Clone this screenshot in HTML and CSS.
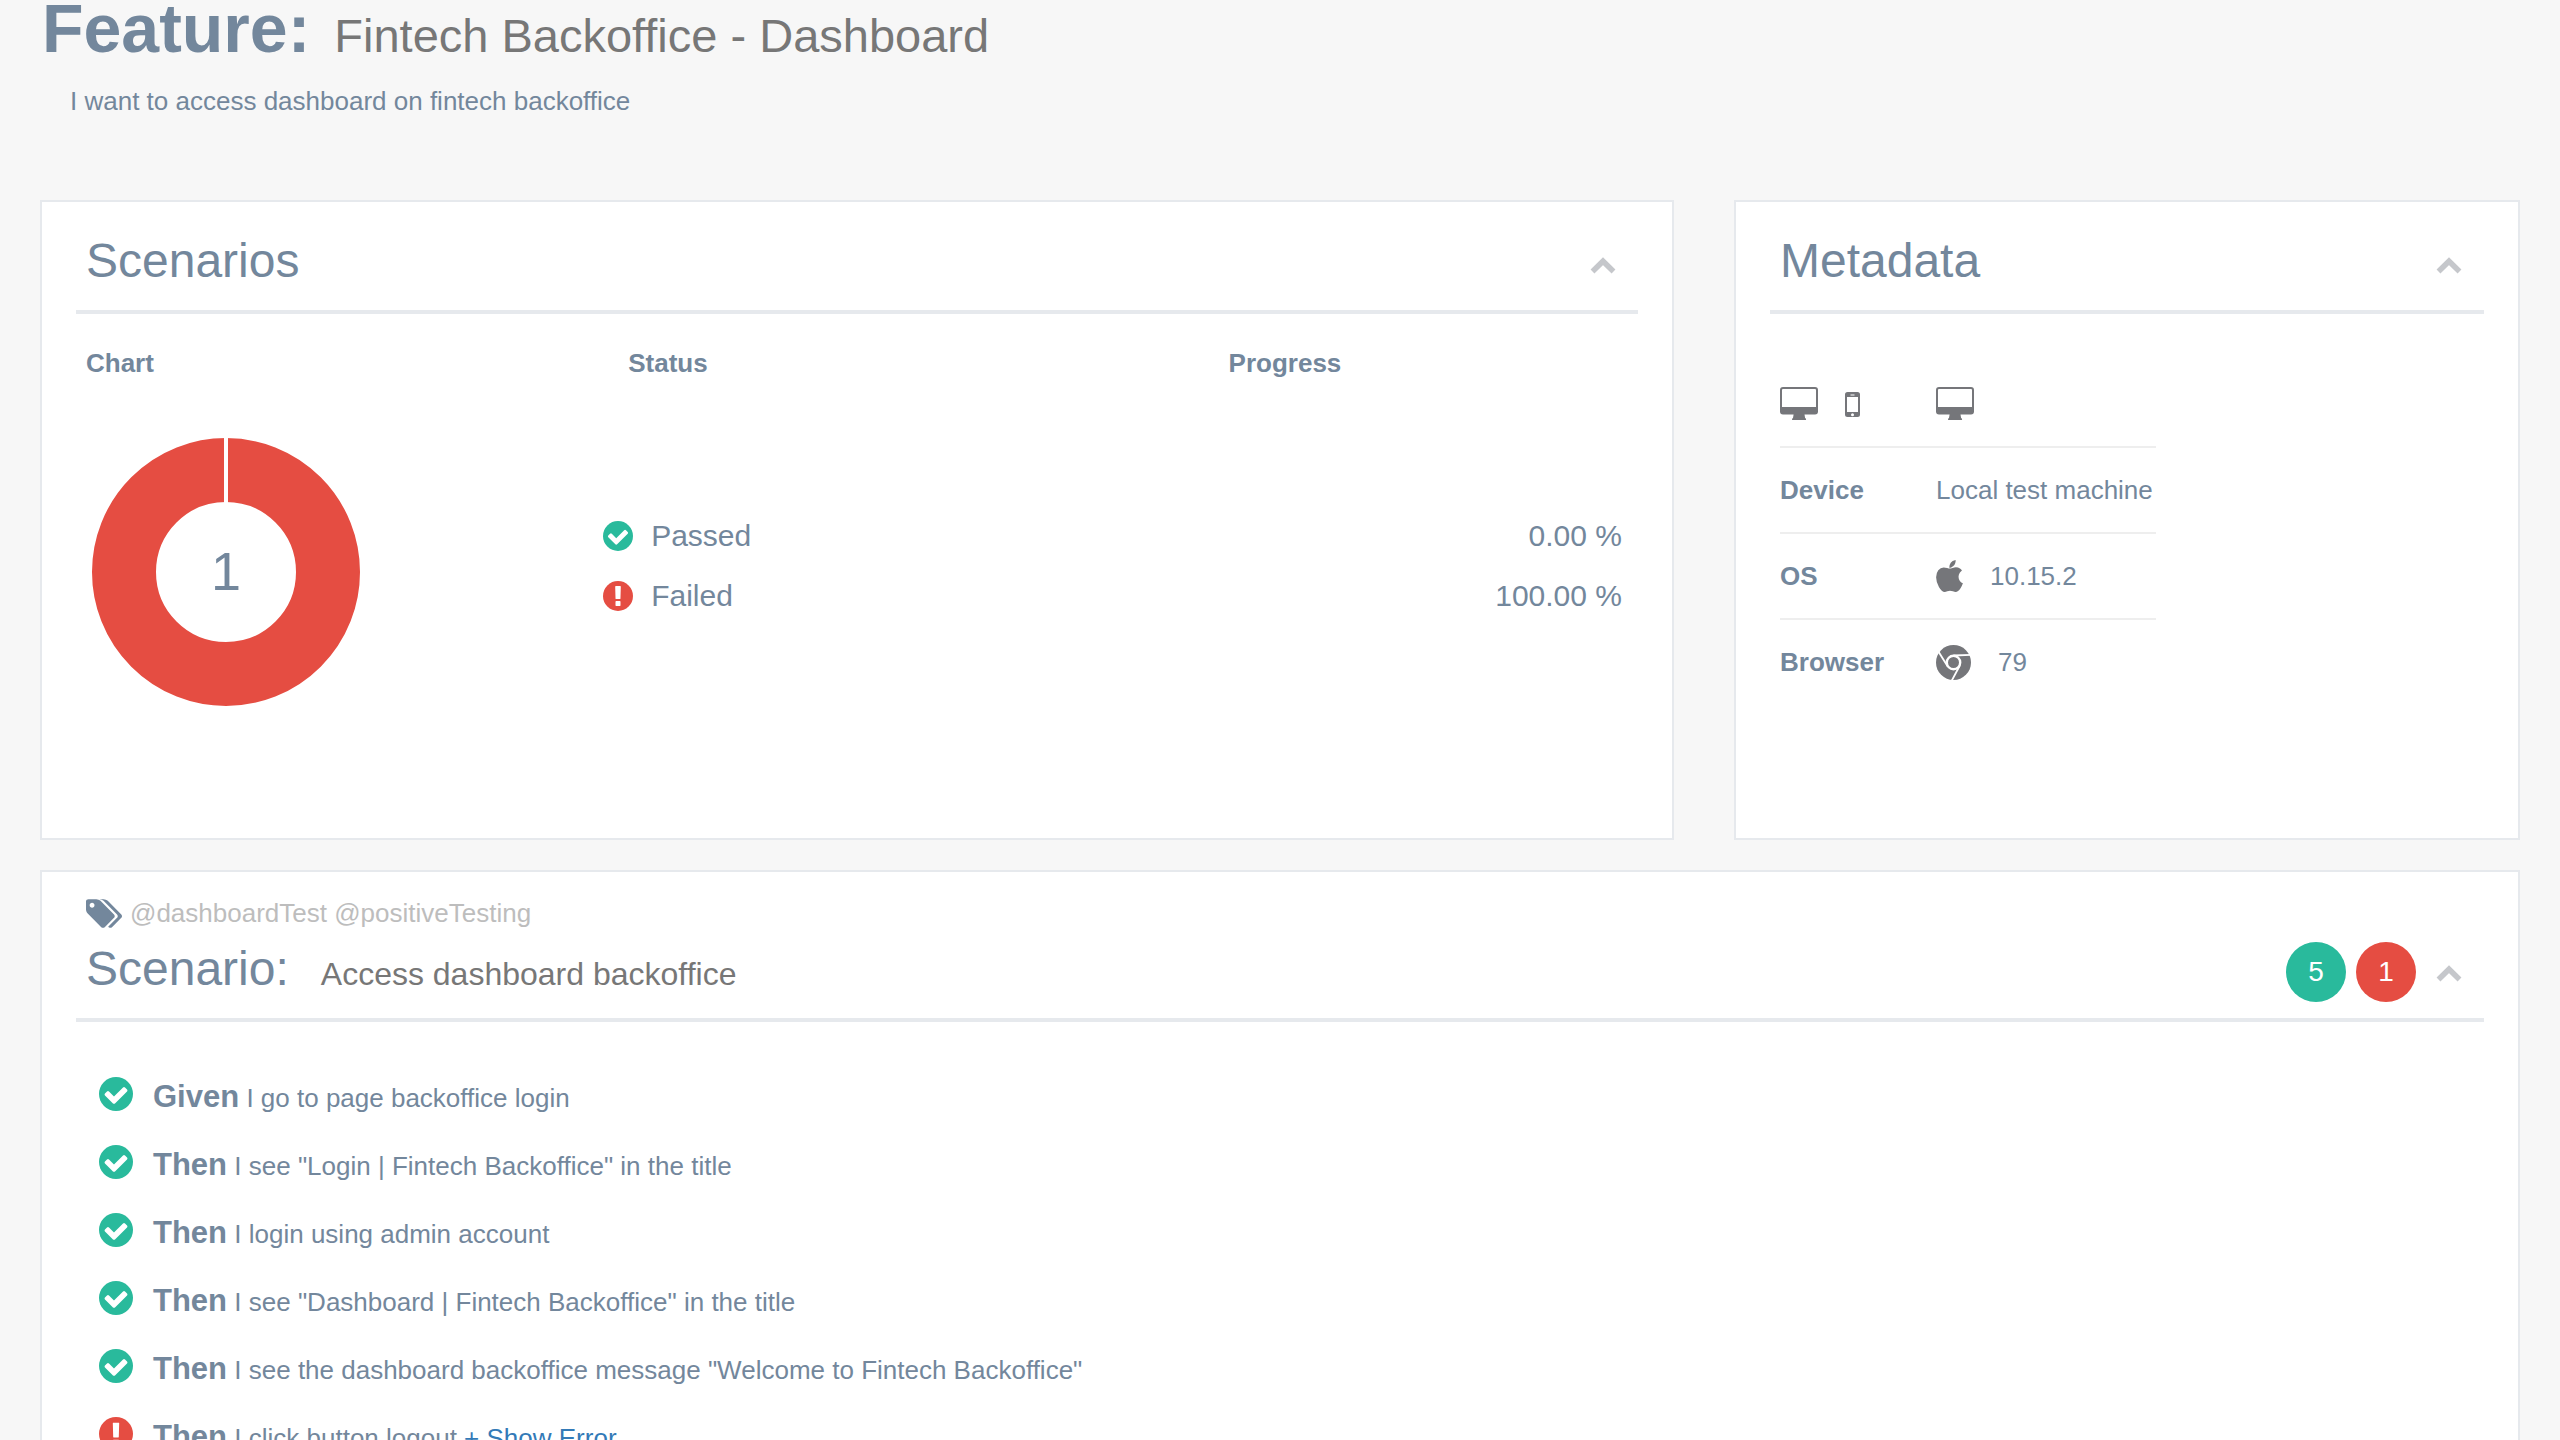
FILE: index.html
```html
<!DOCTYPE html>
<html lang="en">
<head>
<meta charset="utf-8">
<title>Fintech Backoffice - Dashboard</title>
<link rel="stylesheet" href="styles.css">
</head>
<body>
<svg class="sprite" aria-hidden="true">
  <symbol id="pass" viewBox="0 0 1536 1536">
    <circle cx="768" cy="768" r="768" fill="currentColor"/>
    <path fill="#fff" d="M1284 606q0-28-18-46l-91-90q-19-19-45-19t-45 19l-408 407-226-226q-19-19-45-19t-45 19l-91 90q-18 18-18 46 0 27 18 45l362 362q19 19 45 19 27 0 46-19l543-543q18-18 18-45z"/>
  </symbol>
  <symbol id="fail" viewBox="0 0 1536 1536">
    <circle cx="768" cy="768" r="768" fill="currentColor"/>
    <path fill="#fff" d="M896 1246v-190q0-14-9-23.500t-22-9.500h-192q-13 0-23 10t-10 23v190q0 13 10 23t23 10h192q13 0 22-9.500t9-23.500zM894 902l18-621q0-12-10-18-10-8-24-8h-220q-14 0-24 8-10 6-10 18l17 621q0 10 10 17.500t24 7.500h185q14 0 23.500-7.500t10.500-17.500z"/>
  </symbol>
  <symbol id="chevron" viewBox="0 0 26 17">
    <path fill="none" stroke="currentColor" stroke-width="5.500" d="M2.500 14.500L13 4.200l10.500 10.300"/>
  </symbol>
  <symbol id="desktop" viewBox="0 0 38 34">
    <path fill="currentColor" fill-rule="evenodd" d="M3 0h32a3 3 0 0 1 3 3v21.500a3 3 0 0 1-3 3H24.500l.6 3.500q1 .2 1 2H12q0-1.800 1-2l.6-3.500H3a3 3 0 0 1-3-3V3a3 3 0 0 1 3-3zM3 2a1 1 0 0 0-1 1v17h34V3a1 1 0 0 0-1-1z"/>
  </symbol>
  <symbol id="phone" viewBox="0 0 15 25">
    <path fill="currentColor" fill-rule="evenodd" d="M2.500 0h10A2.500 2.500 0 0 1 15 2.500v20a2.500 2.500 0 0 1-2.500 2.500h-10A2.500 2.500 0 0 1 0 22.500v-20A2.500 2.500 0 0 1 2.500 0zM2 5v15h11V5zM7.500 21.200a1.500 1.500 0 1 0 0 3 1.500 1.500 0 0 0 0-3zM5.500 2.500v1h4v-1z"/>
  </symbol>
  <symbol id="apple" viewBox="0 0 1393 1664">
    <path fill="currentColor" d="M1393 1215q-39 125-123 250-129 196-257 196-49 0-140-32-86-32-151-32-61 0-142 33-81 34-132 34-152 0-301-259-147-261-147-503 0-228 113-374 113-144 284-144 72 0 177 30 104 30 138 30 45 0 143-34 102-34 173-34 119 0 213 65 52 36 104 100-79 67-114 118-65 94-65 207 0 124 69 223t158 126zM1017 42q0 61-29 136-30 75-93 138-54 54-108 72-37 11-104 17 3-149 78-257 74-107 250-148 1 3 2.500 11t2.500 11q0 4 .5 10t.5 10z"/>
  </symbol>
  <symbol id="chrome" viewBox="-17.500 -17.500 35 35">
    <circle r="17.500" fill="currentColor"/>
    <g fill="none" stroke="#fff">
      <circle r="6.700" stroke-width="2.400"/>
      <path stroke-width="1.800" d="M0-7l18-.6M6.060 3.500L-2.420 19.390M-6.060 3.500L-15.580-11.790"/>
    </g>
  </symbol>
  <symbol id="tags" viewBox="0 128 1899 1515">
    <path fill="currentColor" d="M448 448q0-53-37.500-90.500t-90.500-37.500-90.500 37.500-37.500 90.500 37.500 90.500 90.500 37.500 90.500-37.500 37.500-90.500zm1067 576q0 53-37 90l-491 492q-39 37-91 37-53 0-90-37l-715-716q-38-37-64.500-101t-26.500-117v-416q0-52 38-90t90-38h416q53 0 117 26.500t102 64.500l715 714q37 39 37 91zm384 0q0 53-37 90l-491 492q-39 37-91 37-36 0-59-14t-53-45l470-470q37-37 37-90 0-52-37-91l-715-714q-38-38-102-64.500t-117-26.500h224q53 0 117 26.500t102 64.500l715 714q37 39 37 91z"/>
  </symbol>
</svg>

<main class="page">
  <header class="feature">
    <h1 class="feature-title">Feature: <small class="feature-name">Fintech Backoffice - Dashboard</small></h1>
    <p class="feature-text">I want to access dashboard on fintech backoffice</p>
  </header>

  <div class="summary">
    <section class="panel">
      <div class="panel-head">
        <h2 class="panel-title">Scenarios</h2>
        <div class="actions">
          <button class="toggle" type="button" aria-label="Collapse scenarios"><svg class="icon-chevron"><use href="#chevron"/></svg></button>
        </div>
      </div>
      <table class="overview">
        <colgroup><col class="col-chart"><col class="col-status"><col></colgroup>
        <thead>
          <tr><th class="head-chart">Chart</th><th class="head-status">Status</th><th class="head-progress">Progress</th></tr>
        </thead>
        <tbody>
          <tr>
            <td class="chart-cell">
              <svg class="donut" viewBox="0 0 268 268" role="img" aria-label="1 scenario, failed">
                <circle class="donut-ring" cx="134" cy="134" r="102"/>
                <path class="donut-split" d="M134 0v66"/>
                <text class="donut-total" x="134" y="152">1</text>
              </svg>
            </td>
            <td class="results-cell" colspan="2">
              <table class="results">
                <tr><td><span class="result"><svg class="icon-result pass"><use href="#pass"/></svg>Passed</span></td><td class="share">0.00 %</td></tr>
                <tr><td><span class="result"><svg class="icon-result fail"><use href="#fail"/></svg>Failed</span></td><td class="share">100.00 %</td></tr>
              </table>
            </td>
          </tr>
        </tbody>
      </table>
    </section>

    <section class="panel">
      <div class="panel-head">
        <h2 class="panel-title">Metadata</h2>
        <div class="actions">
          <button class="toggle" type="button" aria-label="Collapse metadata"><svg class="icon-chevron"><use href="#chevron"/></svg></button>
        </div>
      </div>
      <table class="metadata">
        <tr>
          <th><span class="meta-value"><svg class="icon-desktop"><use href="#desktop"/></svg><svg class="icon-phone"><use href="#phone"/></svg></span></th>
          <td><span class="meta-value"><svg class="icon-desktop"><use href="#desktop"/></svg></span></td>
        </tr>
        <tr><th>Device</th><td>Local test machine</td></tr>
        <tr><th>OS</th><td><span class="meta-value"><svg class="icon-apple"><use href="#apple"/></svg>10.15.2</span></td></tr>
        <tr><th>Browser</th><td><span class="meta-value"><svg class="icon-chrome"><use href="#chrome"/></svg>79</span></td></tr>
      </table>
    </section>
  </div>

  <section class="panel scenario">
    <p class="tags"><svg class="icon-tags"><use href="#tags"/></svg>@dashboardTest @positiveTesting</p>
    <div class="panel-head">
      <h2 class="panel-title">Scenario: <small class="scenario-name">Access dashboard backoffice</small></h2>
      <div class="actions">
        <span class="badge badge-pass">5</span>
        <span class="badge badge-fail">1</span>
        <button class="toggle" type="button" aria-label="Collapse scenario"><svg class="icon-chevron"><use href="#chevron"/></svg></button>
      </div>
    </div>
    <ul class="steps">
      <li class="step"><svg class="icon-step pass"><use href="#pass"/></svg><span class="step-text"><b class="keyword">Given</b> I go to page backoffice login</span></li>
      <li class="step"><svg class="icon-step pass"><use href="#pass"/></svg><span class="step-text"><b class="keyword">Then</b> I see "Login | Fintech Backoffice" in the title</span></li>
      <li class="step"><svg class="icon-step pass"><use href="#pass"/></svg><span class="step-text"><b class="keyword">Then</b> I login using admin account</span></li>
      <li class="step"><svg class="icon-step pass"><use href="#pass"/></svg><span class="step-text"><b class="keyword">Then</b> I see "Dashboard | Fintech Backoffice" in the title</span></li>
      <li class="step"><svg class="icon-step pass"><use href="#pass"/></svg><span class="step-text"><b class="keyword">Then</b> I see the dashboard backoffice message "Welcome to Fintech Backoffice"</span></li>
      <li class="step"><svg class="icon-step fail"><use href="#fail"/></svg><span class="step-text"><b class="keyword">Then</b> I click button logout <a class="error-link" href="#error">+ Show Error</a></span></li>
    </ul>
  </section>
</main>
</body>
</html>
```
FILE: styles.css
```css
* { box-sizing: border-box; }

body {
  margin: 0;
  background: #f7f7f7;
  color: #73879c;
  font: 26px/36px "Helvetica Neue", "Liberation Sans", Arial, sans-serif;
}

h1, h2, p, ul { margin: 0; padding: 0; }
svg { display: block; flex: none; }
.sprite { position: absolute; width: 0; height: 0; }
table { border-collapse: separate; border-spacing: 0; }
th, td { padding: 0; text-align: left; }

.page { padding: 0 40px; }

/* Feature heading */
.feature { padding-bottom: 81px; }
.feature-title {
  display: flex;
  align-items: baseline;
  gap: 24px;
  padding-left: 2px;
  font-size: 68px;
  line-height: 56px;
}
.feature-name { color: #777; font-size: 47px; font-weight: 400; line-height: 36px; }
.feature-text { padding: 27px 30px 0; }

/* Panels */
.summary {
  display: grid;
  grid-template-columns: 1634fr 786fr;
  gap: 60px;
  margin-bottom: 30px;
}
.panel {
  padding: 31px 34px 0;
  border: 2px solid #e6e9ed;
  background: #fff;
}
.panel-head {
  display: flex;
  justify-content: space-between;
  padding: 0 22px 16px 10px;
  border-bottom: 4px solid #e6e9ed;
}
.panel-title {
  display: flex;
  align-items: baseline;
  gap: 32px;
  font-size: 48px;
  font-weight: 400;
  line-height: 56px;
}
.actions { display: flex; align-items: center; gap: 10px; height: 61px; }
.toggle {
  margin-left: 10px;
  padding: 4px 0 0;
  border: 0;
  background: none;
  color: #c5c7cb;
  cursor: pointer;
}
.icon-chevron { width: 26px; height: 17px; }

.pass { color: #29ba9c; }
.fail { color: #e54d42; }

/* Scenario overview */
.overview { width: 100%; table-layout: fixed; }
.col-chart { width: 33.75%; }
.col-status { width: 39.4%; }
.overview thead th { height: 72px; padding-top: 26px; }
.overview .head-chart, .overview .head-progress { padding-left: 10px; }
.overview .head-status { padding-left: 25px; }
.chart-cell { padding: 52px 0 132px 16px; vertical-align: top; }
.donut { width: 268px; height: 268px; }
.donut-ring { fill: none; stroke: #e54d42; stroke-width: 64px; }
.donut-split { stroke: #fff; stroke-width: 4px; }
.donut-total { fill: #73879c; font-size: 54px; text-anchor: middle; }
.results-cell { padding-top: 120px; vertical-align: top; }
.results { width: 100%; font-size: 30px; }
.results td { height: 60px; }
.result { display: flex; align-items: center; gap: 18px; }
.icon-result { width: 30px; height: 30px; }
.results .share { padding-right: 16px; text-align: right; }

/* Metadata */
.metadata { min-width: 376px; margin: 48px 10px 0; }
.metadata th, .metadata td { height: 86px; border-top: 2px solid #eee; }
.metadata tr:first-child > * { height: 84px; border-top: 0; }
.metadata th { width: 156px; }
.meta-value { display: flex; align-items: center; gap: 27px; }
.meta-value svg { color: #75767a; }
.icon-desktop { width: 38px; height: 34px; }
.icon-phone { width: 15px; height: 25px; }
.icon-apple { width: 27px; height: 32px; }
.icon-chrome { width: 35px; height: 35px; }

/* Scenario detail */
.scenario { padding-top: 22px; padding-bottom: 34px; }
.tags {
  display: flex;
  align-items: center;
  gap: 8px;
  padding: 0 10px;
  margin-bottom: 9px;
  color: #bdbdbd;
  line-height: 38px;
}
.icon-tags { width: 36px; height: 29px; color: #73879c; }
.scenario-name { color: #777; font-size: 32px; line-height: 36px; }
.badge {
  width: 60px;
  height: 60px;
  border-radius: 50%;
  color: #fff;
  font-size: 28px;
  line-height: 60px;
  text-align: center;
}
.badge-pass { background: #29ba9c; }
.badge-fail { background: #e54d42; }

.steps { padding: 38px 23px 0; list-style: none; }
.step { display: flex; align-items: center; gap: 20px; height: 68px; }
.icon-step { width: 34px; height: 34px; }
.step-text { padding-top: 6px; }
.keyword { font-size: 31px; }
.error-link { color: #337ab7; text-decoration: none; }
```
